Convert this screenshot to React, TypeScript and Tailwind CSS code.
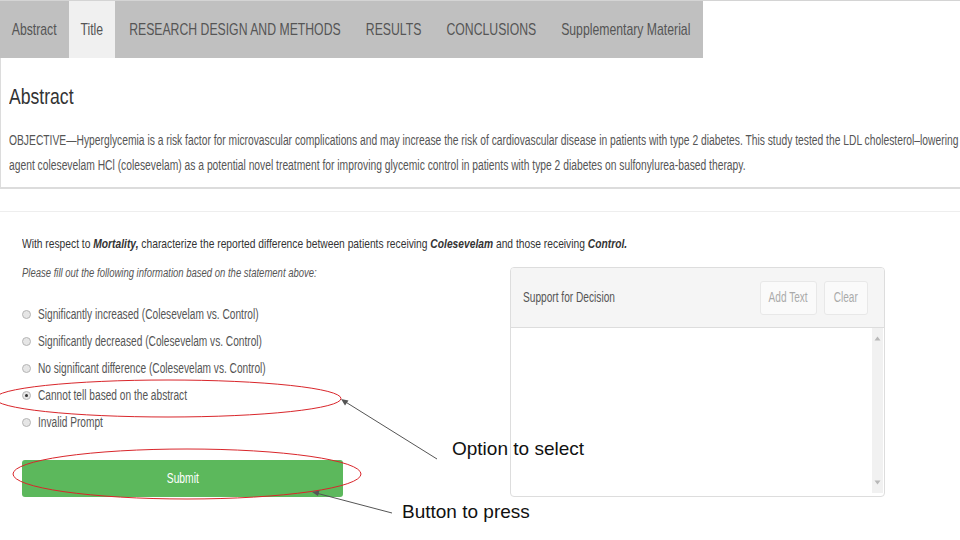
export default function App() {
  const tabs = [
    { label: "Abstract", w: "w-[69px]", active: false },
    { label: "Title", w: "w-[46px]", active: true },
    { label: "RESEARCH DESIGN AND METHODS", w: "w-[239px]", active: false },
    { label: "RESULTS", w: "w-[80px]", active: false },
    { label: "CONCLUSIONS", w: "w-[114px]", active: false },
    { label: "Supplementary Material", w: "w-[155px]", active: false },
  ];
  const options = [
    "Significantly increased (Colesevelam vs. Control)",
    "Significantly decreased (Colesevelam vs. Control)",
    "No significant difference (Colesevelam vs. Control)",
    "Cannot tell based on the abstract",
    "Invalid Prompt",
  ];
  return (
    <div className="relative w-[960px] h-[540px] overflow-hidden bg-white font-['Liberation_Sans',Arial,sans-serif] text-[#555]">
      <div className="border-t border-[#d4d4d4]">
        <div className="flex h-[57px] w-[703px] bg-[#c0c0c0]">
          {tabs.map((t) => (
            <div
              key={t.label}
              className={
                "flex items-center justify-center whitespace-nowrap text-[17px] text-[#555] " +
                t.w +
                (t.active ? " bg-[#f0f0f0]" : "")
              }
            >
              <span className="inline-block origin-center scale-x-[0.72]">{t.label}</span>
            </div>
          ))}
        </div>
      </div>

      <div className="border-l border-b-2 border-[#dcdcdc] pl-2 pt-[25px] pb-[9px]">
        <h2 className="text-[22px] leading-[28px] text-[#333]">
          <span className="inline-block origin-left scale-x-[0.8]">Abstract</span>
        </h2>
        <div className="mt-[17px] whitespace-nowrap text-[14px] leading-[25px] text-[#555]">
          <div className="origin-left scale-x-[0.735]">
            OBJECTIVE—Hyperglycemia is a risk factor for microvascular complications and may increase the risk of cardiovascular disease in patients with type 2 diabetes. This study tested the LDL cholesterol–lowering
          </div>
          <div className="origin-left scale-x-[0.735]">
            agent colesevelam HCl (colesevelam) as a potential novel treatment for improving glycemic control in patients with type 2 diabetes on sulfonylurea-based therapy.
          </div>
        </div>
      </div>

      <div className="mt-[22px] border-t border-[#eeeeee]" />

      <div className="px-[22px]">
        <p className="mt-[22px] whitespace-nowrap text-[13.5px] leading-[20px] text-[#333]">
          <span className="inline-block origin-left scale-x-[0.76]">
            With respect to <b className="italic">Mortality,</b> characterize the reported difference between patients receiving{" "}
            <b className="italic">Colesevelam</b> and those receiving <b className="italic">Control.</b>
          </span>
        </p>

        <div className="mt-[11px] flex">
          <div className="w-[488px]">
            <p className="whitespace-nowrap text-[12.5px] italic leading-[16px] text-[#555]">
              <span className="inline-block origin-left scale-x-[0.76]">
                Please fill out the following information based on the statement above:
              </span>
            </p>
            <div className="mt-[20px] flex flex-col">
              {options.map((o, i) => (
                <div key={o} className="flex h-[27px] items-center gap-[7px] whitespace-nowrap text-[14px] text-[#555]">
                  <span className="flex h-[9px] w-[9px] shrink-0 items-center justify-center rounded-full border border-[#b5b5b5] bg-[#e6e6e6]">
                    {i === 3 && <span className="h-[3px] w-[3px] rounded-full bg-[#333]" />}
                  </span>
                  <span className="inline-block origin-left scale-x-[0.725]">{o}</span>
                </div>
              ))}
            </div>
            <button className="mt-[24px] flex h-[37px] w-[321px] items-center justify-center rounded-[3px] bg-[#5cb85c] text-[14px] text-white">
              <span className="inline-block origin-center scale-x-[0.735]">Submit</span>
            </button>
          </div>

          <div className="mt-[2px] w-[375px] overflow-hidden rounded-[4px] border border-[#dddddd]">
            <div className="flex h-[60px] items-center border-b border-[#dddddd] bg-[#f5f5f5] pl-3 pr-4">
              <span className="inline-block origin-left scale-x-[0.725] whitespace-nowrap text-[14px] text-[#555]">
                Support for Decision
              </span>
              <div className="ml-auto flex gap-[7px]">
                <span className="flex h-[34px] w-[57px] items-center justify-center rounded-[3px] border border-[#e8e8e8] bg-[#fafafa] text-[14px] text-[#aaa]">
                  <span className="inline-block origin-center scale-x-[0.72] whitespace-nowrap">Add Text</span>
                </span>
                <span className="flex h-[34px] w-[44px] items-center justify-center rounded-[3px] border border-[#e8e8e8] bg-[#fafafa] text-[14px] text-[#aaa]">
                  <span className="inline-block origin-center scale-x-[0.72]">Clear</span>
                </span>
              </div>
            </div>
            <div className="flex h-[165px] bg-white">
              <div className="flex-1" />
              <div className="mr-[1px] flex w-[11px] flex-col items-center justify-between bg-[#f1f1f1] py-[8px]">
                <svg width="7" height="5" viewBox="0 0 7 5">
                  <path d="M3.5 0.5 L6.5 4.5 L0.5 4.5 Z" fill="#b8b8b8" />
                </svg>
                <svg width="7" height="5" viewBox="0 0 7 5">
                  <path d="M0.5 0.5 L6.5 0.5 L3.5 4.5 Z" fill="#b8b8b8" />
                </svg>
              </div>
            </div>
          </div>
        </div>
      </div>

      <svg className="pointer-events-none absolute left-0 top-0" width="960" height="540" viewBox="0 0 960 540">
        <ellipse cx="168" cy="398.5" rx="173" ry="18.5" fill="none" stroke="#d9262b" strokeWidth="1" />
        <ellipse cx="187" cy="474" rx="174" ry="25" fill="none" stroke="#d9262b" strokeWidth="1" />
        <line x1="437" y1="459" x2="344" y2="401" stroke="#555" strokeWidth="1" />
        <path d="M341 399 L348.5 400.5 L345 405.5 Z" fill="#555" />
        <line x1="392" y1="513" x2="316" y2="493" stroke="#555" strokeWidth="1" />
        <path d="M312 492 L319.5 490.5 L318 496 Z" fill="#555" />
      </svg>
      <div className="absolute left-[452px] top-[437px] whitespace-nowrap text-[19px] leading-[24px] text-[#111]">
        Option to select
      </div>
      <div className="absolute left-[402px] top-[500px] whitespace-nowrap text-[19px] leading-[24px] text-[#111]">
        Button to press
      </div>
    </div>
  );
}
